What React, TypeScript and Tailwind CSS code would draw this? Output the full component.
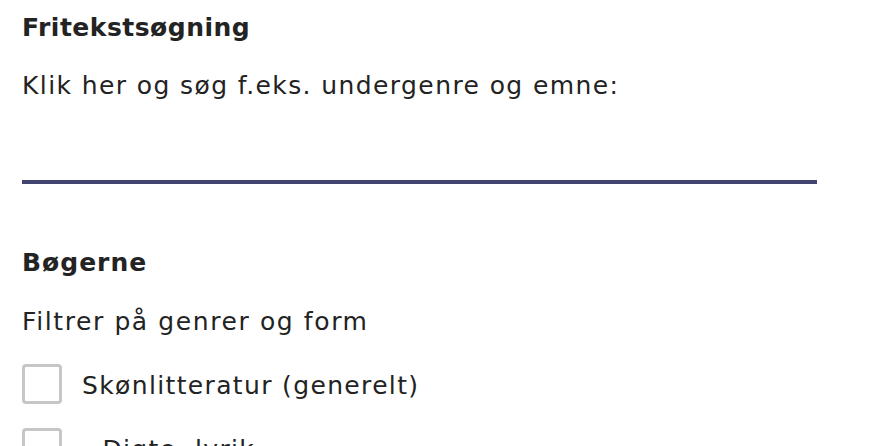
const filters = [
  { label: 'Skønlitteratur (generelt)', sub: false },
  { label: 'Digte, lyrik', sub: true },
];

export default function App() {
  return (
    <div
      className="min-h-screen bg-white pl-[22px] pt-[10px] text-[#232323]"
      style={{ fontFamily: '"DejaVu Sans", "Liberation Sans", sans-serif' }}
    >
      <h2 className="text-[25px] font-bold leading-[36px] tracking-[0.5px]">Fritekstsøgning</h2>
      <label className="mt-[22px] block text-[25px] leading-[36px] tracking-[1.4px]">
        Klik her og søg f.eks. undergenre og emne:
      </label>
      <input
        type="text"
        className="block h-[80px] w-[795px] border-b-4 border-[#41446e] bg-transparent text-[25px] outline-none"
      />

      <h2 className="mt-[61px] text-[25px] font-bold leading-[36px] tracking-[1px]">Bøgerne</h2>
      <p className="mt-[23px] text-[25px] leading-[36px] tracking-[1.6px]">Filtrer på genrer og form</p>

      <div className="mt-[24px] flex flex-col gap-[24px]">
        {filters.map((f) => (
          <label key={f.label} className="flex items-center gap-[20px]">
            <span className="h-[40px] w-[40px] shrink-0 rounded-[4px] border-[3px] border-[#c6c6c6] bg-white" />
            <span className="pt-[4px] text-[25px] leading-[36px] tracking-[1.35px]">
              {f.sub && <span className="mr-[10px]">-</span>}
              {f.label}
            </span>
          </label>
        ))}
      </div>
    </div>
  );
}
